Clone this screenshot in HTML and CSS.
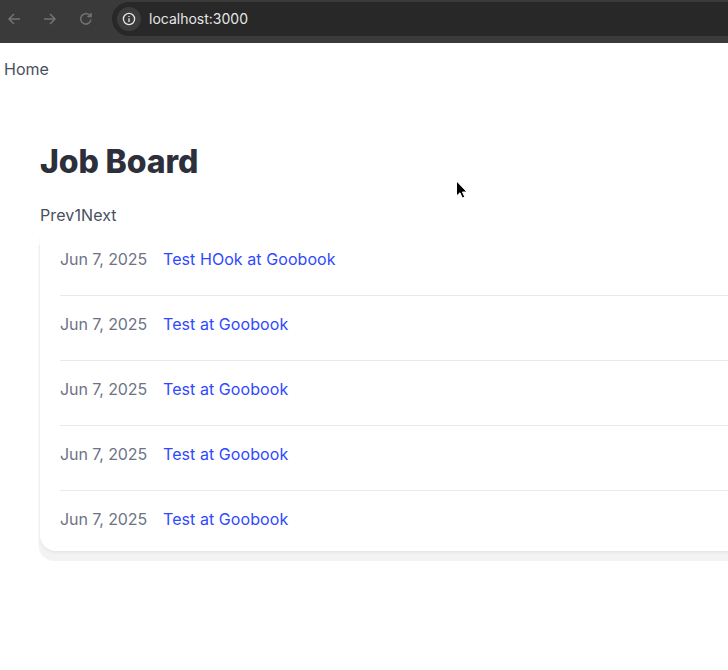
FILE: index.html
```html
<!DOCTYPE html>
<html lang="en">
<head>
<meta charset="utf-8">
<title>Job Board</title>
<link rel="stylesheet" href="styles.css">
</head>
<body>
<header class="browser-bar">
  <div class="nav-buttons">
    <svg class="nav-icon" viewBox="0 0 16 16"><path d="M14 8H3M8 3 3 8l5 5"/></svg>
    <svg class="nav-icon" viewBox="0 0 16 16"><path d="M2 8h11M8 3l5 5-5 5"/></svg>
    <svg class="nav-icon" viewBox="0 0 16 16"><path d="M13 8.5A5.2 5.2 0 1 1 11.4 4L13 5.6M13 2v3.6H9.4"/></svg>
  </div>
  <div class="omnibox">
    <span class="info-chip">
      <svg class="info-icon" viewBox="0 0 14 14"><circle cx="7" cy="7" r="5.6"/><path d="M7 6.3v3.6"/><path d="M7 3.9v1.2"/></svg>
    </span>
    <span class="url">localhost:3000</span>
  </div>
</header>
<nav class="top-nav"><a class="nav-link" href="#">Home</a></nav>
<main class="content">
  <h1 class="title">Job Board</h1>
  <div class="pager"><span>Prev</span><span>1</span><span>Next</span></div>
  <ul class="jobs">
    <li class="job"><span class="date">Jun 7, 2025</span><a class="job-link" href="#">Test HOok at Goobook</a></li>
    <li class="job"><span class="date">Jun 7, 2025</span><a class="job-link" href="#">Test at Goobook</a></li>
    <li class="job"><span class="date">Jun 7, 2025</span><a class="job-link" href="#">Test at Goobook</a></li>
    <li class="job"><span class="date">Jun 7, 2025</span><a class="job-link" href="#">Test at Goobook</a></li>
    <li class="job"><span class="date">Jun 7, 2025</span><a class="job-link" href="#">Test at Goobook</a></li>
  </ul>
</main>
<svg class="cursor" viewBox="0 0 12 20"><path d="M1.5 1v15l3.5-3.2 2.3 5.2 2.5-1-2.3-5h4.5z"/></svg>
</body>
</html>
```
FILE: styles.css
```css
* { box-sizing: border-box; }
html, body { margin: 0; padding: 0; }
body {
  position: relative;
  width: 728px;
  height: 670px;
  overflow: hidden;
  background: #fff;
  font-family: Inter, "Liberation Sans", sans-serif;
  font-size: 16px;
  line-height: 24px;
  color: #4a4f5e;
}
.browser-bar {
  height: 43px;
  padding: 2px 0 7px 3px;
  display: flex;
  align-items: stretch;
  background: #3a3a3a;
}
.nav-buttons { display: flex; align-items: center; gap: 20px; width: 109px; padding-left: 3px; }
.nav-icon { width: 16px; height: 16px; fill: none; stroke: #737373; stroke-width: 1.5; }
.omnibox {
  flex: 1;
  display: flex;
  align-items: center;
  gap: 8px;
  padding-left: 5px;
  background: #282828;
  border-radius: 17px 0 0 17px;
}
.info-chip {
  width: 24px;
  height: 24px;
  border-radius: 50%;
  background: #3c3c3c;
  display: flex;
  align-items: center;
  justify-content: center;
}
.info-icon { width: 14px; height: 14px; fill: none; stroke: #e8e8e8; stroke-width: 1.3; }
.url { font-size: 14px; line-height: 20px; color: #e6e6e6; }
.top-nav { padding: 14px 4px; height: 52px; }
.nav-link { color: #4a4f5e; text-decoration: none; }
.content { padding: 47px 0 0 40px; }
.title { margin: 0; font-size: 32px; line-height: 40px; font-weight: 800; letter-spacing: -.12px; color: #2d303b; }
.pager { display: flex; margin-top: 21px; letter-spacing: .1px; }
.jobs {
  list-style: none;
  margin: 8px 0 0;
  padding: 0 0 0 20px;
  width: 720px;
  border-radius: 0 0 0 16px;
  background: #fff;
  box-shadow: 0 2px 3px rgba(0,0,0,.05), -1.5px 10px 0 0 #f3f3f3;
}
.job {
  padding: 16px 0 24px;
  display: flex;
  gap: 16px;
  border-bottom: 1px solid #e8e9ee;
}
.job:first-child { padding-top: 12px; }
.job:last-child { border-bottom: 0; padding-bottom: 20px; }
.date { width: 87px; color: #6d7386; letter-spacing: -.08px; white-space: nowrap; }
.job-link { color: #2f49ff; text-decoration: none; letter-spacing: .07px; }
.cursor {
  position: absolute;
  left: 455px;
  top: 180px;
  width: 12px;
  height: 20px;
  fill: #000;
  stroke: #fff;
  stroke-width: 1;
}
```
